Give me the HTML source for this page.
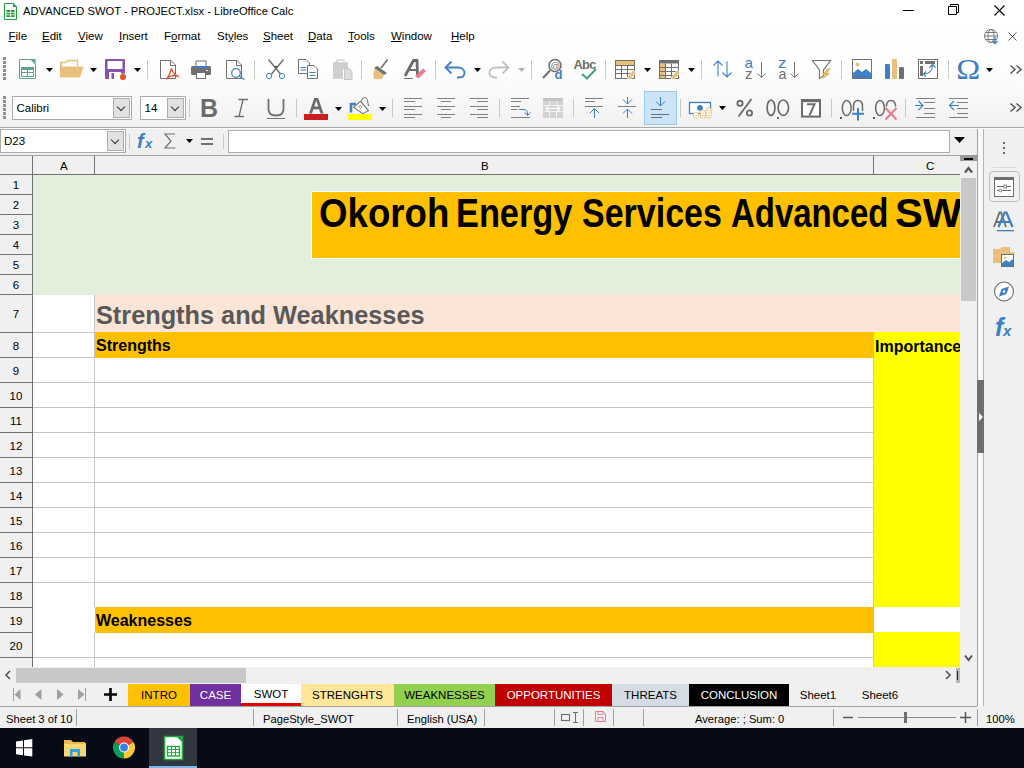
<!DOCTYPE html>
<html><head><meta charset="utf-8">
<style>
*{box-sizing:border-box;margin:0;padding:0}
html,body{width:1024px;height:768px;overflow:hidden;background:#f0f0f0;font-family:"Liberation Sans",sans-serif;font-size:11px;color:#000}
.a{position:absolute}
.t{position:absolute;white-space:nowrap;line-height:1}
#titlebar{left:0;top:0;width:1024px;height:24px;background:#fff}
#dock{left:0;top:24px;width:1024px;height:104px;background:linear-gradient(#fff 0%,#fefefe 45%,#f1f1f1 100%)}
#fbar{left:0;top:128px;width:1024px;height:27px;background:#f0f0f0}
#colhdr{left:0;top:155px;width:960px;height:20px;background:#f0f0f0}
#grid{left:0;top:0;width:960px;height:667px;overflow:hidden}
.gl{position:absolute;height:1px;background:#c6c6c6}
.glv{position:absolute;width:1px;background:#c6c6c6}
.rh{position:absolute;left:0;width:32px;text-align:center;font-size:11.5px;padding-top:1px}
.rhl{position:absolute;left:0;width:32px;height:1px;background:#727272}
#rowhdr{left:0;top:175px;width:33px;height:492px;background:#f0f0f0;border-right:1px solid #727272;overflow:hidden}
#sidebar{left:977px;top:155px;width:47px;height:551px;background:#f0f0f0}
#vscroll{left:960px;top:155px;width:17px;height:513px;background:#f0f0f0}
#hscroll{left:0;top:667px;width:960px;height:16px;background:#f0f0f0}
#tabs{left:0;top:683px;width:977px;height:23px;background:#f0f0f0}
#status{left:0;top:706px;width:1024px;height:22px;background:#f0f0f0}
#taskbar{left:0;top:728px;width:1024px;height:40px;background:#060b16}
.menu span{position:absolute;top:31px;font-size:11.5px;line-height:1;white-space:nowrap}
u{text-decoration:underline;text-underline-offset:1px}

.box{background:#fff;border:1px solid #acacac}
.btn{background:#e1e1e1;border:1px solid #adadad}
.btn::after{content:"";position:absolute;left:4px;top:5px;width:5px;height:5px;border-right:1.2px solid #333;border-bottom:1.2px solid #333;transform:rotate(45deg)}
.tab{position:absolute;top:684px;height:22px;line-height:23px;text-align:center;font-size:11.5px;white-space:nowrap}
.st{top:713.5px;font-size:11.2px}
.ssep{position:absolute;top:709px;width:1px;height:17px;background:#a0a0a0}
.ttl{top:193px;font-size:40px;font-weight:bold;transform-origin:0 0}
</style></head><body>

<div id="titlebar" class="a"></div>
<div id="dock" class="a"></div>
<!-- title bar -->
<svg class="a" style="left:4px;top:3px" width="13" height="17" viewBox="0 0 13 17">
<path d="M0.5 0.5H9L12.5 4V16.5H0.5Z" fill="#fff" stroke="#1e9e3a" stroke-width="1"/>
<path d="M9 0L13 4H9Z" fill="#1e9e3a"/>
<rect x="2.5" y="7" width="8" height="7" fill="#1e9e3a"/>
<path d="M2.5 9.5H10.5M2.5 11.8H10.5M6.5 7V14" stroke="#fff" stroke-width="0.8"/>
</svg>
<div class="t" style="left:23px;top:6px;font-size:11.2px;color:#000">ADVANCED SWOT - PROJECT.xlsx - LibreOffice Calc</div>
<div class="a" style="left:903px;top:10px;width:11px;height:1px;background:#000"></div>
<svg class="a" style="left:948px;top:4px" width="11" height="11" viewBox="0 0 11 11"><path d="M0.5 2.5H8.5V10.5H0.5Z M2.5 2.5V0.5H10.5V8.5H8.5" fill="none" stroke="#000" stroke-width="1"/></svg>
<svg class="a" style="left:994px;top:5px" width="11" height="11" viewBox="0 0 11 11"><path d="M0.5 0.5L10.5 10.5M10.5 0.5L0.5 10.5" stroke="#000" stroke-width="1.1"/></svg>
<!-- menu -->
<div class="menu">
<span style="left:8.5px"><u>F</u>ile</span>
<span style="left:42px"><u>E</u>dit</span>
<span style="left:78px"><u>V</u>iew</span>
<span style="left:119px"><u>I</u>nsert</span>
<span style="left:164px">F<u>o</u>rmat</span>
<span style="left:217px">St<u>y</u>les</span>
<span style="left:263px"><u>S</u>heet</span>
<span style="left:308px"><u>D</u>ata</span>
<span style="left:348px"><u>T</u>ools</span>
<span style="left:391px"><u>W</u>indow</span>
<span style="left:451px"><u>H</u>elp</span>
</div>
<svg class="a" style="left:983px;top:28px" width="18" height="17" viewBox="0 0 18 17">
<circle cx="8" cy="8" r="6.5" fill="none" stroke="#7a7a7a" stroke-width="1"/>
<ellipse cx="8" cy="8" rx="3" ry="6.5" fill="none" stroke="#7a7a7a" stroke-width="1"/>
<path d="M1.5 8H14.5M2.5 4.5H13.5M2.5 11.5H13.5" stroke="#7a7a7a" stroke-width="1"/>
<path d="M12 9V15.5M9.5 13L12 15.7L14.5 13" fill="none" stroke="#3d7fc4" stroke-width="1.2"/>
</svg>
<svg class="a" style="left:1008px;top:32px" width="9" height="9" viewBox="0 0 9 9"><path d="M0.5 0.5L8.5 8.5M8.5 0.5L0.5 8.5" stroke="#555" stroke-width="1"/></svg>

<div id="fbar" class="a"></div>
<div id="colhdr" class="a"></div>
<div id="rowhdr" class="a">
<div class="rh" style="top:0px;height:19px;line-height:19px">1</div>
<div class="rhl" style="top:19px"></div>
<div class="rh" style="top:20px;height:19px;line-height:19px">2</div>
<div class="rhl" style="top:39px"></div>
<div class="rh" style="top:40px;height:19px;line-height:19px">3</div>
<div class="rhl" style="top:59px"></div>
<div class="rh" style="top:60px;height:19px;line-height:19px">4</div>
<div class="rhl" style="top:79px"></div>
<div class="rh" style="top:80px;height:19px;line-height:19px">5</div>
<div class="rhl" style="top:99px"></div>
<div class="rh" style="top:100px;height:19px;line-height:19px">6</div>
<div class="rhl" style="top:119px"></div>
<div class="rh" style="top:120px;height:37px;line-height:37px">7</div>
<div class="rhl" style="top:157px"></div>
<div class="rh" style="top:158px;height:24px;line-height:24px">8</div>
<div class="rhl" style="top:182px"></div>
<div class="rh" style="top:183px;height:24px;line-height:24px">9</div>
<div class="rhl" style="top:207px"></div>
<div class="rh" style="top:208px;height:24px;line-height:24px">10</div>
<div class="rhl" style="top:232px"></div>
<div class="rh" style="top:233px;height:24px;line-height:24px">11</div>
<div class="rhl" style="top:257px"></div>
<div class="rh" style="top:258px;height:24px;line-height:24px">12</div>
<div class="rhl" style="top:282px"></div>
<div class="rh" style="top:283px;height:24px;line-height:24px">13</div>
<div class="rhl" style="top:307px"></div>
<div class="rh" style="top:308px;height:24px;line-height:24px">14</div>
<div class="rhl" style="top:332px"></div>
<div class="rh" style="top:333px;height:24px;line-height:24px">15</div>
<div class="rhl" style="top:357px"></div>
<div class="rh" style="top:358px;height:24px;line-height:24px">16</div>
<div class="rhl" style="top:382px"></div>
<div class="rh" style="top:383px;height:24px;line-height:24px">17</div>
<div class="rhl" style="top:407px"></div>
<div class="rh" style="top:408px;height:24px;line-height:24px">18</div>
<div class="rhl" style="top:432px"></div>
<div class="rh" style="top:433px;height:24px;line-height:24px">19</div>
<div class="rhl" style="top:457px"></div>
<div class="rh" style="top:458px;height:24px;line-height:24px">20</div>
<div class="rhl" style="top:482px"></div>
<div class="rh" style="top:483px;height:24px;line-height:24px">21</div>
<div class="rhl" style="top:507px"></div>
</div>
<div id="grid" class="a">
<div class="a" style="left:33px;top:175px;width:927px;height:492px;background:#fff"></div>
<div class="a" style="left:33px;top:175px;width:927px;height:120px;background:#e2efda"></div>
<div class="a" style="left:95px;top:294px;width:865px;height:38px;background:#fbe5d6"></div>
<div class="gl" style="left:33px;top:332px;width:62px"></div>
<div class="gl" style="left:33px;top:357px;width:62px"></div>
<div class="gl" style="left:33px;top:382px;width:62px"></div>
<div class="gl" style="left:33px;top:407px;width:62px"></div>
<div class="gl" style="left:33px;top:432px;width:62px"></div>
<div class="gl" style="left:33px;top:457px;width:62px"></div>
<div class="gl" style="left:33px;top:482px;width:62px"></div>
<div class="gl" style="left:33px;top:507px;width:62px"></div>
<div class="gl" style="left:33px;top:532px;width:62px"></div>
<div class="gl" style="left:33px;top:557px;width:62px"></div>
<div class="gl" style="left:33px;top:582px;width:62px"></div>
<div class="gl" style="left:33px;top:657px;width:62px"></div>
<div class="gl" style="left:33px;top:682px;width:62px"></div>
<div class="gl" style="left:95px;top:357px;width:779px"></div>
<div class="gl" style="left:95px;top:382px;width:779px"></div>
<div class="gl" style="left:95px;top:407px;width:779px"></div>
<div class="gl" style="left:95px;top:432px;width:779px"></div>
<div class="gl" style="left:95px;top:457px;width:779px"></div>
<div class="gl" style="left:95px;top:482px;width:779px"></div>
<div class="gl" style="left:95px;top:507px;width:779px"></div>
<div class="gl" style="left:95px;top:532px;width:779px"></div>
<div class="gl" style="left:95px;top:557px;width:779px"></div>
<div class="gl" style="left:95px;top:582px;width:779px"></div>
<div class="gl" style="left:95px;top:607px;width:779px"></div>
<div class="gl" style="left:95px;top:632px;width:779px"></div>
<div class="gl" style="left:95px;top:657px;width:779px"></div>
<div class="gl" style="left:95px;top:682px;width:779px"></div>
<div class="glv" style="left:94px;top:295px;height:400px"></div>
<div class="glv" style="left:873px;top:333px;height:400px"></div>
<div class="a" style="left:95px;top:332px;width:779px;height:26px;background:#ffc000"></div>
<div class="a" style="left:874px;top:332px;width:86px;height:275px;background:#ffff00"></div>
<div class="a" style="left:94px;top:607px;width:780px;height:26px;background:#ffc000"></div><div class="a" style="left:94px;top:607px;width:1px;height:26px;background:#fff"></div>
<div class="a" style="left:874px;top:632px;width:86px;height:40px;background:#ffff00"></div>
<div class="a" style="left:311px;top:191px;width:660px;height:68px;background:#ffc000;border:1px solid #fff"></div>
<div class="t ttl" style="left:319px;transform:scaleX(0.916)">Okoroh</div><div class="t ttl" style="left:456px;transform:scaleX(0.858)">Energy</div><div class="t ttl" style="left:582px;transform:scaleX(0.85)">Services</div><div class="t ttl" style="left:731px;transform:scaleX(0.823)">Advanced</div><div class="t ttl" style="left:895px;transform:scaleX(1.04)">SW</div>
<div class="t" style="left:96px;top:303px;font-size:25.3px;font-weight:bold;color:#595959">Strengths and Weaknesses</div>
<div class="t" style="left:96px;top:338px;font-size:16px;font-weight:bold">Strengths</div>
<div class="t" style="left:875px;top:339px;font-size:16px;font-weight:bold">Importance</div>
<div class="t" style="left:96px;top:613px;font-size:16px;font-weight:bold">Weaknesses</div>
</div>
<div id="vscroll" class="a"></div>
<div id="hscroll" class="a"></div>
<div id="sidebar" class="a"></div>
<div id="tabs" class="a"></div>
<div id="status" class="a"></div>
<div id="taskbar" class="a"></div>
<!--C2-->
<!-- dock separator line -->
<div class="a" style="left:0;top:127px;width:1024px;height:1px;background:#a9a9a9"></div>
<div class="a" style="left:0;top:128px;width:1024px;height:1px;background:#fcfcfc"></div>
<!-- font name box -->
<div class="a box" style="left:12px;top:96px;width:120px;height:24px"></div>
<div class="a btn" style="left:113px;top:98px;width:17px;height:20px"></div>
<div class="t" style="left:16.5px;top:103px;font-size:11.5px">Calibri</div>
<div class="a box" style="left:140px;top:96px;width:46px;height:24px"></div>
<div class="a btn" style="left:167px;top:98px;width:17px;height:20px"></div>
<div class="t" style="left:144.5px;top:103px;font-size:11.5px">14</div>
<!-- name box -->
<div class="a box" style="left:0;top:129px;width:126px;height:24px"></div>
<div class="a btn" style="left:107px;top:131px;width:17px;height:20px"></div>
<div class="t" style="left:4px;top:136px;font-size:11.5px">D23</div>
<!-- formula input -->
<div class="a box" style="left:228px;top:130px;width:722px;height:23px"></div>
<!-- column header -->
<div class="a" style="left:0;top:155px;width:960px;height:1px;background:#a0a0a0"></div>
<div class="a" style="left:0;top:174px;width:960px;height:1px;background:#727272"></div>
<div class="a" style="left:32px;top:156px;width:1px;height:19px;background:#727272"></div>
<div class="a" style="left:94px;top:156px;width:1px;height:19px;background:#727272"></div>
<div class="a" style="left:873px;top:156px;width:1px;height:19px;background:#727272"></div>
<div class="t" style="left:60px;top:161px;font-size:11.5px">A</div>
<div class="t" style="left:481px;top:161px;font-size:11.5px">B</div>
<div class="t" style="left:926px;top:161px;font-size:11.5px">C</div>
<!-- vertical scrollbar -->
<div class="a" style="left:960px;top:155px;width:17px;height:6px;background:#9a9a9a"></div>
<div class="a" style="left:964px;top:158px;width:9px;height:1.6px;background:#000"></div>
<svg class="a" style="left:960px;top:161px" width="17" height="17" viewBox="0 0 17 17"><path d="M5 11.5L8.5 7L12 11.5" fill="none" stroke="#555" stroke-width="2.2"/></svg>
<div class="a" style="left:961px;top:178px;width:15px;height:123px;background:#c8c8c8"></div>
<svg class="a" style="left:960px;top:650px" width="17" height="17" viewBox="0 0 17 17"><path d="M5 5.5L8.5 10L12 5.5" fill="none" stroke="#555" stroke-width="2"/></svg>
<!-- horizontal scrollbar -->
<svg class="a" style="left:0;top:667px" width="16" height="16" viewBox="0 0 16 16"><path d="M10 4L6 8L10 12" fill="none" stroke="#555" stroke-width="1.6"/></svg>
<div class="a" style="left:16px;top:668px;width:230px;height:15px;background:#c8c8c8"></div>
<svg class="a" style="left:940px;top:667px" width="16" height="16" viewBox="0 0 16 16"><path d="M6 4L10 8L6 12" fill="none" stroke="#555" stroke-width="1.6"/></svg>
<div class="a" style="left:956px;top:668px;width:4px;height:15px;background:#b8b8b8"></div>
<div class="a" style="left:957px;top:671px;width:1px;height:9px;background:#222"></div>
<!-- sidebar borders -->
<div class="a" style="left:977px;top:129px;width:1px;height:577px;background:#a0a0a0"></div>
<div class="a" style="left:983px;top:129px;width:1px;height:577px;background:#b4b4b4"></div>
<div class="a" style="left:978px;top:129px;width:5px;height:577px;background:#f8f8f8"></div>
<div class="a" style="left:977px;top:380px;width:7px;height:73px;background:#6e6e6e"></div>
<svg class="a" style="left:977px;top:410px" width="7" height="14" viewBox="0 0 7 14"><path d="M2 3L6 7L2 11Z" fill="#fff"/></svg>
<div class="a" style="left:984px;top:130px;width:40px;height:576px;background:#f0f0f0"></div>
<!--I1-->
<svg class="a" style="left:0;top:0" width="1024" height="160" viewBox="0 0 1024 160">
<defs>
<path id="dd" d="M0 0H7L3.5 4Z"/>
</defs>
<!-- grips -->
<g fill="#8f8f8f">
<rect x="3" y="57" width="3" height="3"/><rect x="3" y="61" width="3" height="3"/><rect x="3" y="65" width="3" height="3"/><rect x="3" y="69" width="3" height="3"/><rect x="3" y="73" width="3" height="3"/><rect x="3" y="77" width="3" height="3"/>
<rect x="3" y="96" width="3" height="3"/><rect x="3" y="100" width="3" height="3"/><rect x="3" y="104" width="3" height="3"/><rect x="3" y="108" width="3" height="3"/><rect x="3" y="112" width="3" height="3"/><rect x="3" y="116" width="3" height="3"/>
</g>
<!-- separators tb1 -->
<g fill="#c8c8c8">
<rect x="147" y="60" width="1" height="19"/><rect x="254" y="60" width="1" height="19"/><rect x="361" y="60" width="1" height="19"/><rect x="435" y="60" width="1" height="19"/><rect x="531" y="60" width="1" height="19"/><rect x="605" y="60" width="1" height="19"/><rect x="701" y="60" width="1" height="19"/><rect x="841" y="60" width="1" height="19"/><rect x="948" y="60" width="1" height="19"/>
<rect x="189" y="99" width="1" height="18"/><rect x="296" y="99" width="1" height="18"/><rect x="392" y="99" width="1" height="18"/><rect x="499" y="99" width="1" height="18"/><rect x="573" y="99" width="1" height="18"/><rect x="680" y="99" width="1" height="18"/><rect x="831" y="99" width="1" height="18"/><rect x="905" y="99" width="1" height="18"/>
<rect x="129" y="134" width="1" height="15"/><rect x="223" y="134" width="1" height="15"/>
</g>
<!-- dropdown arrows -->
<g fill="#000">
<use href="#dd" x="46" y="68"/><use href="#dd" x="90" y="68"/><use href="#dd" x="134" y="68"/>
<use href="#dd" x="474" y="68" transform="translate(0,0)"/>
<use href="#dd" x="644" y="68"/><use href="#dd" x="688" y="68"/><use href="#dd" x="986" y="68"/>
<use href="#dd" x="335" y="107"/><use href="#dd" x="379" y="107"/><use href="#dd" x="719" y="106"/>
<use href="#dd" x="186" y="139"/>
</g>
<use href="#dd" x="518" y="68" fill="#b4b4b4"/>
<!-- new spreadsheet -->
<g>
<path d="M19.5 59.5H31L35.5 64V78.5H19.5Z" fill="#fff" stroke="#5fa487"/>
<path d="M30 59H35.5V64.5Z" fill="#5fa487"/>
<rect x="21.5" y="67.5" width="12" height="9" fill="#fff" stroke="#5fa487"/>
<rect x="21" y="67" width="13" height="3" fill="#5fa487"/>
<path d="M21.5 72.5H33.5M27.5 70V76.5" stroke="#5fa487" stroke-width="1"/>
</g>
<!-- open folder -->
<g>
<path d="M60.5 62.5H66L68 60.5H77.5V66" fill="none" stroke="#e8c07c" stroke-width="1.3"/>
<path d="M60 66.5H83.5L80 77.5H60Z" fill="#e8c07c"/>
<path d="M60 62H62V77H60Z" fill="#e8c07c"/>
</g>
<!-- save -->
<g>
<rect x="105" y="59" width="20" height="20" rx="1" fill="#8952ad"/>
<rect x="107.5" y="61" width="15" height="8" fill="#fff"/>
<rect x="109" y="72" width="12" height="7" fill="#fff"/>
<rect x="111.5" y="73" width="2.5" height="6" fill="#8952ad"/>
<circle cx="123" cy="77" r="3.6" fill="#fff"/>
<circle cx="123" cy="77" r="3" fill="#e0532b"/>
</g>
<!-- pdf -->
<g>
<path d="M160.5 60.5H171L175.5 65V78.5H160.5Z" fill="#fff" stroke="#707070"/>
<path d="M170.5 60.5V65.5H175.5" fill="none" stroke="#707070"/>
<path d="M171.5 68.5C170.5 72 169 75.5 166.5 79.5M171.5 68.5C172.5 72 175 75 179 77M167 78C170 75.5 174 75 178.5 76" fill="none" stroke="#e0532b" stroke-width="1.3"/>
</g>
<!-- print -->
<g>
<rect x="196" y="61" width="10" height="6" fill="#fff" stroke="#707070"/>
<rect x="191" y="66" width="20" height="9" rx="1.5" fill="#707070"/>
<rect x="195" y="66" width="12" height="2" fill="#3f7fc4"/>
<rect x="196.5" y="72.5" width="9" height="6" fill="#fff" stroke="#707070"/>
<rect x="206" y="70" width="2" height="1" fill="#fff"/>
</g>
<!-- print preview -->
<g>
<path d="M226.5 60.5H237L241.5 65V78.5H226.5Z" fill="#fff" stroke="#707070"/>
<path d="M236.5 60.5V65.5H241.5" fill="none" stroke="#707070"/>
<circle cx="236" cy="73" r="4.3" fill="#fff" stroke="#3f7fc4" stroke-width="1.3"/>
<path d="M239 76L244.5 79.5" stroke="#3f7fc4" stroke-width="1.3"/>
</g>
<!-- cut -->
<g>
<path d="M268.5 59.5L280.5 74M283.5 59.5L271.5 74" stroke="#707070" stroke-width="1.5"/><circle cx="276" cy="67" r="1.2" fill="#505050"/>
<circle cx="269" cy="76" r="2.6" fill="#fff" stroke="#3f7fc4" stroke-width="1"/>
<circle cx="282" cy="76" r="2.6" fill="#fff" stroke="#3f7fc4" stroke-width="1"/>
</g>
<!-- copy -->
<g>
<path d="M298.5 59.5H306L309.5 63V73.5H298.5Z" fill="#fff" stroke="#707070"/>
<path d="M300.5 67.5H306M300.5 70H306" stroke="#3f7fc4"/>
<path d="M307.5 65.5H314L317.5 69V78.5H307.5Z" fill="#fff" stroke="#707070"/>
<path d="M309.5 72.5H315.5M309.5 75.5H315.5" stroke="#3f7fc4"/>
</g>
<!-- paste disabled -->
<g>
<path d="M333 62H337V60.5H344V62H348V69H343V79H333Z" fill="#cfcfcf"/>
<path d="M344.5 68.5H349L352 71.5V79.5H344.5Z" fill="#dcdcdc" stroke="#c4c4c4"/>
<rect x="337" y="60" width="7" height="3" fill="#fff" stroke="#c4c4c4"/>
</g>
<!-- clone brush -->
<g>
<path d="M387.5 59.5L381 68" stroke="#707070" stroke-width="1.6"/>
<path d="M377 66L387 73L384 75L374 68Z" fill="#707070"/>
<path d="M375 68.5L384 75C383 77 382 79 381 79H374C373 77 373 73 375 68.5Z" fill="#e8c07c"/>
</g>
<!-- clear formatting -->
<g>
<path d="M405 76L413.5 60.5H417L417.5 76" fill="none" stroke="#6b6b6b" stroke-width="2.8"/>
<path d="M409 70H417" stroke="#707070" stroke-width="2"/>
<path d="M404 78.5H413" stroke="#707070" stroke-width="1"/>
<path d="M415 76L423 68.5L426 71L418.5 78.5Z" fill="#e47d8e"/>
</g>
<!-- undo -->
<g fill="none" stroke="#3f7fc4" stroke-width="1.8">
<path d="M446 67.5H458C462 67.5 464.5 70 464.5 73C464.5 76 462 77.5 459 77.5H457"/>
<path d="M451.5 61.5L445.5 67.5L451.5 73.5"/>
</g>
<!-- redo -->
<g fill="none" stroke="#c0c0c0" stroke-width="1.8">
<path d="M508 67.5H496C492 67.5 489.5 70 489.5 73C489.5 76 492 77.5 495 77.5H497"/>
<path d="M502.5 61.5L508.5 67.5L502.5 73.5"/>
</g>
<!-- find & replace -->
<g>
<circle cx="555" cy="65.5" r="6" fill="#fff" stroke="#707070" stroke-width="1.6"/>
<path d="M550 70.5L543 78" stroke="#707070" stroke-width="2"/>
<text x="550.5" y="69" font-family="Liberation Sans" font-size="9.5" fill="#707070">@</text>
<text x="554.5" y="79" font-family="Liberation Sans" font-weight="bold" font-size="13" fill="#3f7fc4">d</text>
</g>
<!-- spelling -->
<g>
<text x="573.5" y="69" font-family="Liberation Sans" font-weight="bold" font-size="13" fill="#707070" textLength="23">Abc</text>
<path d="M582 74L587 78.5L596 69" fill="none" stroke="#4fa084" stroke-width="2.2"/>
</g>
<!-- row table -->
<g>
<rect x="615.5" y="60.5" width="19" height="18" fill="#fff" stroke="#707070"/>
<rect x="616" y="61" width="18" height="4" fill="#e8c07c"/>
<path d="M615.5 65.5H634.5M615.5 69.5H634.5M615.5 73.5H634.5M621.5 65.5V78.5M627.5 65.5V78.5" stroke="#707070"/>
<path d="M627 78L633 70L636 72.5L630 80Z" fill="#e8c07c" stroke="#fff" stroke-width="0.6"/>
</g>
<!-- column table -->
<g>
<rect x="659.5" y="60.5" width="19" height="18" fill="#fff" stroke="#707070"/>
<rect x="659" y="60" width="20" height="3.5" fill="#707070"/>
<rect x="660" y="64" width="5" height="14" fill="#e8c07c"/>
<path d="M665.5 63.5V78.5M671.5 63.5V78.5M659.5 67.5H678.5M659.5 71.5H678.5M659.5 75.5H678.5" stroke="#707070"/>
<path d="M671 78L677 70L680 72.5L674 80Z" fill="#e8c07c" stroke="#fff" stroke-width="0.6"/>
</g>
<!-- sort -->
<g fill="none" stroke="#3f7fc4" stroke-width="1.1">
<path d="M718 61V76.5M713.5 65.5L718 61L722.5 65.5"/>
<path d="M727 61.5V77M722.5 72.5L727 77L731.5 72.5"/>
</g>
<!-- sort ascending -->
<g>
<text x="744.5" y="68" font-family="Liberation Sans" font-size="15" fill="#3f7fc4" textLength="8.5" lengthAdjust="spacingAndGlyphs">a</text>
<text x="745" y="79" font-family="Liberation Sans" font-size="14" fill="#707070" textLength="7.5" lengthAdjust="spacingAndGlyphs">z</text>
<path d="M761.5 62V77.5M757.5 73.5L761.5 77.5L765.5 73.5" fill="none" stroke="#707070" stroke-width="1"/>
</g>
<!-- sort descending -->
<g>
<text x="778" y="68" font-family="Liberation Sans" font-size="15" fill="#3f7fc4" textLength="8.5" lengthAdjust="spacingAndGlyphs">z</text>
<text x="778.5" y="79" font-family="Liberation Sans" font-size="14" fill="#707070" textLength="8" lengthAdjust="spacingAndGlyphs">a</text>
<path d="M794.5 62V77.5M790.5 73.5L794.5 77.5L798.5 73.5" fill="none" stroke="#707070" stroke-width="1"/>
</g>
<!-- autofilter -->
<g>
<path d="M812.5 60.5H830.5L823.5 70V76L819.5 78.5V70Z" fill="#fff" stroke="#707070" stroke-width="1.1"/>
<path d="M828 68.5L821.5 75.5H825L821 80.5L830.5 73H827L831 68.5Z" fill="#e8b45a"/>
</g>
<!-- image -->
<g>
<rect x="852.5" y="59.5" width="19" height="19" fill="#fff" stroke="#707070"/>
<circle cx="857.5" cy="64.5" r="2" fill="#e8c07c"/>
<path d="M853 78V73L858 69L862 72L866 69L871 73V78Z" fill="#3f7fc4"/>
</g>
<!-- chart -->
<g>
<rect x="885" y="64" width="5" height="15" rx="1" fill="#3f7fc4"/>
<rect x="892" y="59" width="5" height="20" rx="1" fill="#e8c07c"/>
<rect x="899" y="67" width="5" height="12" rx="1" fill="#707070"/>
</g>
<!-- pivot -->
<g>
<rect x="918.5" y="59.5" width="19" height="19" fill="#fff" stroke="#707070"/>
<rect x="920" y="61" width="3" height="3" fill="#707070"/>
<rect x="920" y="66" width="3" height="10" fill="#707070"/>
<rect x="925" y="61" width="10" height="3" fill="#707070"/>
<path d="M923.5 74C929 74 932.5 70.5 932.5 65M929.5 67.5L932.5 64.5L935.5 67.5M926 71.5L923.5 74L926 76.5" fill="none" stroke="#3f7fc4" stroke-width="1.1"/>
</g>
<!-- omega -->
<text x="956.3" y="78.8" font-family="Liberation Serif" font-size="30" fill="#3f7fc4" textLength="24" lengthAdjust="spacingAndGlyphs">Ω</text>
<!-- chevrons -->
<path d="M1010.5 65.5L1015 69.5L1010.5 73.5M1016.5 65.5L1021 69.5L1016.5 73.5" fill="none" stroke="#555" stroke-width="1.5"/>
<path d="M1010.5 103.5L1015 107.5L1010.5 111.5M1016.5 103.5L1021 107.5L1016.5 111.5" fill="none" stroke="#555" stroke-width="1.5"/>
</svg>
<!--I2-->
<svg class="a" style="left:0;top:0" width="1024" height="160" viewBox="0 0 1024 160">
<!-- bold -->
<text x="200" y="117" font-family="Liberation Sans" font-weight="bold" font-size="25" fill="#6b6b6b">B</text>
<!-- italic -->
<path d="M243 99.5L239 116.5M238.5 99.5H248M234.5 116.5H244" stroke="#707070" stroke-width="1.3" fill="none"/>
<!-- underline -->
<path d="M268.5 99V109C268.5 113.5 271.5 115.5 276 115.5C280.5 115.5 283.5 113.5 283.5 109V99" fill="none" stroke="#707070" stroke-width="1.8"/>
<rect x="267" y="118" width="18" height="1" fill="#707070"/>
<!-- font color -->
<path d="M309 113.5L314.3 98H318.2L323.5 113.5H320.5L319.1 109.3H313.4L312 113.5Z M314.3 106.6H318.2L316.25 100.6Z" fill="#6b6b6b" fill-rule="evenodd"/>
<rect x="304" y="114" width="24" height="6" fill="#cc1f1f"/>
<!-- highlight -->
<path d="M351 112.5V104H356" fill="none" stroke="#3f7fc4" stroke-width="2.6"/>
<path d="M361.5 101C361.5 96.5 367.5 96.5 367.5 100.5L368.5 106" fill="none" stroke="#707070" stroke-width="1"/>
<path d="M353.6 107.2L360.6 101.3L368.5 110.7L362.8 113.7Z" fill="#fff" stroke="#707070" stroke-width="1.1"/>
<path d="M360.3 105.3L362 107L360.3 108.7L358.6 107Z" fill="#fff" stroke="#707070" stroke-width="0.8"/>
<rect x="348" y="114" width="24" height="6" fill="#ffff00"/>
<!-- align left/center/right -->
<g fill="#808080">
<rect x="404" y="98" width="18" height="1"/><rect x="404" y="101" width="11" height="1"/><rect x="404" y="106" width="18" height="1"/><rect x="404" y="109" width="11" height="1"/><rect x="404" y="114" width="18" height="1"/><rect x="404" y="117" width="11" height="1"/>
<rect x="437" y="98" width="18" height="1"/><rect x="441" y="101" width="10" height="1"/><rect x="437" y="106" width="18" height="1"/><rect x="441" y="109" width="10" height="1"/><rect x="437" y="114" width="18" height="1"/><rect x="441" y="117" width="10" height="1"/>
<rect x="470" y="98" width="18" height="1"/><rect x="477" y="101" width="11" height="1"/><rect x="470" y="106" width="18" height="1"/><rect x="477" y="109" width="11" height="1"/><rect x="470" y="114" width="18" height="1"/><rect x="477" y="117" width="11" height="1"/>
</g>
<!-- wrap -->
<g>
<rect x="511" y="98" width="18" height="1" fill="#808080"/><rect x="511" y="101" width="10" height="1" fill="#808080"/><rect x="511" y="106" width="9" height="1" fill="#808080"/><rect x="511" y="109" width="6" height="1" fill="#808080"/><rect x="511" y="117" width="19" height="1" fill="#808080"/>
<path d="M519 109.5H524C526 109.5 527.5 111 527.5 113V115M524.5 112.5L527.5 115.5L530.5 112.5" fill="none" stroke="#3f7fc4" stroke-width="1"/>
</g>
<!-- merge disabled -->
<g>
<rect x="543" y="98" width="20" height="20" fill="#d4d4d4"/>
<rect x="543" y="98" width="20" height="3" fill="#c4c4c4"/>
<path d="M543.5 105.5H562.5M543.5 111.5H562.5M549.5 101V105.5M556.5 101V105.5M549.5 111.5V118M556.5 111.5V118" stroke="#f2f2f2" stroke-width="1"/>
<path d="M546 108.5H560M548.5 106L546 108.5L548.5 111M557.5 106L560 108.5L557.5 111" fill="none" stroke="#fff" stroke-width="1.1"/>
</g>
<!-- align top -->
<g>
<rect x="585" y="98" width="18" height="1" fill="#808080"/><rect x="585" y="101" width="10" height="1" fill="#808080"/><rect x="585" y="106" width="18" height="1" fill="#808080"/>
<path d="M594.5 118V108.5M590 113L594.5 108.5L599 113" fill="none" stroke="#3f7fc4" stroke-width="1"/>
</g>
<!-- center vertical -->
<g>
<rect x="618" y="106" width="18" height="1" fill="#808080"/>
<path d="M627.5 97V104M623 99.5L627.5 104L632 99.5M627.5 118V109M623 113.5L627.5 109L632 113.5" fill="none" stroke="#3f7fc4" stroke-width="1"/>
</g>
<!-- align bottom selected -->
<rect x="644.5" y="91.5" width="32" height="33" fill="#cce4f7" stroke="#99c9ef"/>
<g>
<rect x="651" y="114" width="18" height="1" fill="#707070"/><rect x="651" y="117" width="11" height="1" fill="#707070"/><rect x="651" y="109" width="11" height="1" fill="#707070"/>
<path d="M660.5 97V106M656 101.5L660.5 106L665 101.5" fill="none" stroke="#3f7fc4" stroke-width="1"/>
</g>
<!-- currency -->
<g>
<rect x="689.5" y="102.5" width="21" height="11" fill="#fff" stroke="#3f7fc4" stroke-width="1.3"/>
<circle cx="700" cy="107.8" r="2.9" fill="#3f7fc4"/>
<rect x="693.5" y="112.5" width="5" height="5.5" rx="2" fill="#fff" stroke="#e8c07c" stroke-width="0.9"/>
<rect x="700.5" y="110.5" width="5" height="7.5" rx="2" fill="#fff" stroke="#e8c07c" stroke-width="0.9"/>
<rect x="706" y="108" width="5" height="10" rx="2" fill="#fff" stroke="#e8c07c" stroke-width="0.9"/>
<path d="M694.5 115.2H697.5M701.5 113H704.5M701.5 115.5H704.5M707 110.7H710M707 113H710M707 115.5H710" stroke="#e8c07c" stroke-width="0.8"/>
</g>
<!-- percent -->
<g fill="none" stroke="#6b6b6b" stroke-width="1.9"><circle cx="740" cy="103.3" r="2.6"/><circle cx="749.5" cy="113" r="2.6"/><path d="M751.5 99L738.5 116.5"/></g>
<!-- 0.0 -->
<g fill="none" stroke="#6b6b6b" stroke-width="1.7"><ellipse cx="771" cy="107.7" rx="3.9" ry="7.7"/><ellipse cx="783.3" cy="107.7" rx="5.2" ry="7.7"/></g><rect x="777" y="117" width="2" height="2" fill="#6b6b6b"/>
<!-- 7 in box -->
<rect x="802" y="100" width="18" height="16.6" fill="#fff" stroke="#6b6b6b" stroke-width="2"/><rect x="801" y="99" width="20" height="3.2" fill="#6b6b6b"/><path d="M807 104.3H814.5L809.5 115.5" fill="none" stroke="#6b6b6b" stroke-width="2"/>
<!-- add decimal -->
<rect x="840" y="117" width="2" height="2" fill="#555"/><g fill="none" stroke="#6b6b6b" stroke-width="1.5"><ellipse cx="846.7" cy="108" rx="4.4" ry="7.6"/><path d="M853.5 111V106.5C853.5 102.5 855.5 100.4 858 100.4C860.5 100.4 862.5 102.5 862.5 106.5V111"/></g><path d="M852 113.8H864M858 108V120.5" stroke="#3f7fc4" stroke-width="2"/>
<!-- delete decimal -->
<rect x="873" y="117" width="2" height="2" fill="#555"/><g fill="none" stroke="#6b6b6b" stroke-width="1.5"><ellipse cx="880" cy="108" rx="4.4" ry="7.6"/><path d="M886.5 106.5C886.5 102.5 888.5 100.4 891 100.4C893.5 100.4 895.5 102.5 895.5 106.5"/></g><path d="M885.5 108L896.5 119.5M896.5 108L885.5 119.5" stroke="#e47d8e" stroke-width="2.2"/>
<!-- increase indent -->
<g fill="#808080">
<rect x="916" y="98" width="19" height="1"/><rect x="924" y="102" width="11" height="1"/><rect x="924" y="108" width="11" height="1"/><rect x="924" y="113" width="11" height="1"/><rect x="916" y="117" width="19" height="1"/>
</g>
<path d="M915 105.5H923M918.5 101L923 105.5L918.5 110" fill="none" stroke="#3f7fc4" stroke-width="1.1"/>
<g fill="#808080">
<rect x="949" y="98" width="19" height="1"/><rect x="957" y="102" width="11" height="1"/><rect x="957" y="108" width="11" height="1"/><rect x="957" y="113" width="11" height="1"/><rect x="949" y="117" width="19" height="1"/>
</g>
<path d="M959 105.5H949.5M954 101L949.5 105.5L954 110" fill="none" stroke="#3f7fc4" stroke-width="1.1"/>
<!-- formula bar icons -->
<text x="137" y="148" font-family="Liberation Sans" font-style="italic" font-weight="bold" font-size="20" fill="#3f7fc4">f</text>
<text x="145" y="148" font-family="Liberation Sans" font-style="italic" font-weight="bold" font-size="13" fill="#3f7fc4">x</text>
<path d="M175 134H165L171 141L165 148H175.5" fill="none" stroke="#707070" stroke-width="1.2"/>
<rect x="201" y="138" width="12" height="2" fill="#707070"/><rect x="201" y="143" width="12" height="2" fill="#707070"/>
<path d="M954 137H965L959.5 143Z" fill="#000"/>
</svg>
<!--C3-->
<!-- sidebar content -->
<div class="a" style="left:1003px;top:142px;width:2px;height:2px;background:#6a6a6a"></div>
<div class="a" style="left:1003px;top:147px;width:2px;height:2px;background:#6a6a6a"></div>
<div class="a" style="left:1003px;top:152px;width:2px;height:2px;background:#6a6a6a"></div>
<div class="a" style="left:993px;top:167px;width:23px;height:1px;background:#d8d8d8"></div>
<div class="a" style="left:988.5px;top:171px;width:31px;height:31px;border:1px solid #bdbdbd;border-radius:4px;background:#f0f0f0"></div>
<svg class="a" style="left:984px;top:170px" width="40" height="170" viewBox="984 170 40 170">
<rect x="994.5" y="177.5" width="19" height="19" fill="#fff" stroke="#6e6e6e"/>
<rect x="994" y="177" width="20" height="3" fill="#6e6e6e"/>
<path d="M997 186.5H1011M997 190.5H1011" stroke="#6e6e6e" stroke-width="1"/>
<rect x="1004" y="185" width="2.5" height="3" fill="#fff" stroke="#6e6e6e" stroke-width="0.8"/>
<circle cx="1000.5" cy="190.5" r="1.4" fill="#fff" stroke="#6e6e6e" stroke-width="0.8"/>
<path d="M994 227L999.5 212.5H1001L1006 227M996 222H1004" fill="none" stroke="#6e6e6e" stroke-width="1.8"/>
<path d="M998.5 227L1004.5 212.5H1006.5L1012.5 227M1001 222H1010" fill="none" stroke="#3f7fc4" stroke-width="2.2"/>
<rect x="997" y="230" width="17" height="1.3" fill="#3f7fc4"/>
<path d="M993 249H1000L1002 247H1010V252H1015L1012 263H993Z" fill="#e8c07c"/>
<rect x="1001.5" y="254.5" width="12" height="12" fill="#fff" stroke="#6e6e6e"/>
<circle cx="1005" cy="258" r="1.3" fill="#e8c07c"/>
<path d="M1002 266V263L1006 260L1009 262L1013 259V266Z" fill="#3f7fc4"/>
<circle cx="1004" cy="291.5" r="9.5" fill="#fff" stroke="#6e6e6e" stroke-width="1.1"/>
<path d="M1009 286.5L1006.5 294L999 296.5L1001.5 289Z" fill="#3f7fc4"/>
<circle cx="1004" cy="291.5" r="1.3" fill="#fff"/>
<text x="995" y="336" font-family="Liberation Sans" font-style="italic" font-weight="bold" font-size="25" fill="#3f7fc4">f</text>
<text x="1003" y="336" font-family="Liberation Sans" font-style="italic" font-weight="bold" font-size="15" fill="#3f7fc4">x</text>
</svg>
<!-- sheet tabs -->
<svg class="a" style="left:0;top:683px" width="128" height="23" viewBox="0 683 128 23">
<rect x="13" y="688" width="1" height="13" fill="#a0a0a0"/>
<path d="M14.5 694.5L20.5 689V700Z" fill="#a0a0a0"/>
<path d="M35 694.5L41.5 689V700Z" fill="#a0a0a0"/>
<path d="M63.5 694.5L57 689V700Z" fill="#a0a0a0"/>
<path d="M84.5 694.5L78 689V700Z" fill="#a0a0a0"/>
<rect x="85" y="688" width="1" height="13" fill="#a0a0a0"/>
<path d="M110.5 688V701M104 694.5H117" stroke="#000" stroke-width="2.6"/>
</svg>
<div class="tab" style="left:128px;width:62px;background:#ffc000">INTRO</div>
<div class="tab" style="left:190px;width:51px;background:#7030a0;color:#fff">CASE</div>
<div class="tab" style="left:241px;width:60px;background:#fff;border-bottom:3px solid #e00000;line-height:20px">SWOT</div>
<div class="tab" style="left:301px;width:93px;background:#ffe699">STRENGHTS</div>
<div class="tab" style="left:394px;width:101px;background:#92d050">WEAKNESSES</div>
<div class="tab" style="left:495px;width:117px;background:#c00000;color:#fff">OPPORTUNITIES</div>
<div class="tab" style="left:612px;width:77px;background:#d6dce4">THREATS</div>
<div class="tab" style="left:689px;width:100px;background:#000;color:#fff">CONCLUSION</div>
<div class="tab" style="left:789px;width:58px">Sheet1</div>
<div class="tab" style="left:847px;width:66px">Sheet6</div>
<div class="a" style="left:0;top:706px;width:977px;height:1px;background:#a0a0a0"></div>
<!-- status bar -->
<div class="t st" style="left:6px">Sheet 3 of 10</div>
<div class="t st" style="left:263px">PageStyle_SWOT</div>
<div class="t st" style="left:407px">English (USA)</div>
<div class="t st" style="left:695px">Average: ; Sum: 0</div>
<div class="t st" style="left:986px">100%</div>
<div class="ssep" style="left:76px"></div><div class="ssep" style="left:253px"></div><div class="ssep" style="left:397px"></div><div class="ssep" style="left:484px"></div><div class="ssep" style="left:554px"></div><div class="ssep" style="left:583px"></div><div class="ssep" style="left:613px"></div><div class="ssep" style="left:643px"></div><div class="ssep" style="left:833px"></div><div class="ssep" style="left:977px"></div>
<svg class="a" style="left:540px;top:706px" width="440" height="22" viewBox="540 706 440 22">
<rect x="561.5" y="714.5" width="8" height="6" fill="none" stroke="#6e6e6e" stroke-width="1.1"/>
<path d="M573 712.5H578M575.5 712.5V722.5M573 722.5H578" stroke="#6e6e6e" stroke-width="1.1"/>
<path d="M595.5 711.5H603L605.5 714V721.5H595.5Z" fill="none" stroke="#e47d8e" stroke-width="1"/>
<rect x="598" y="711.5" width="5" height="3" fill="none" stroke="#e47d8e" stroke-width="0.9"/>
<rect x="598" y="717.5" width="5" height="4" fill="none" stroke="#e47d8e" stroke-width="0.9"/>
<path d="M843 717.5H853" stroke="#555" stroke-width="1.5"/>
<path d="M858 717.5H956" stroke="#8a8a8a" stroke-width="1.2"/>
<rect x="904" y="712" width="3" height="11" fill="#6e6e6e"/>
<path d="M960 717.5H971M965.5 712V723" stroke="#555" stroke-width="1.5"/>
</svg>
<!-- taskbar icons -->
<svg class="a" style="left:0;top:728px" width="210" height="40" viewBox="0 728 210 40">
<path d="M16 741.5L23 740.5V747.3H16Z M24 740.3L32.3 739V747.3H24Z M16 748.3H23V755.3L16 754.3Z M24 748.3H32.3V756.6L24 755.5Z" fill="#fff"/>
<path d="M64 741.5H71L73 743H86V756.5H64Z" fill="#f7d674"/>
<path d="M64 740H71L73 742H85V744H64Z" fill="#e9b94a"/>
<path d="M70 749H80V757H77.5V752H72.5V757H70Z" fill="#2d9fe3"/>
<path d="M124 747.5L114.47 742A11 11 0 0 1 133.53 742Z" fill="#db4437"/>
<path d="M124 747.5L133.53 742A11 11 0 0 1 124 758.5Z" fill="#fcc934"/>
<path d="M124 747.5L124 758.5A11 11 0 0 1 114.47 742Z" fill="#0f9d58"/>
<circle cx="124" cy="747.5" r="5" fill="#fff"/>
<circle cx="124" cy="747.5" r="3.9" fill="#3c7fe6"/>
<rect x="149" y="728" width="48" height="40" fill="#32363e"/>
<rect x="149" y="766" width="48" height="2" fill="#76b9ed"/>
<path d="M164.5 736.5H177.5L182.5 741.5V759.5H164.5Z" fill="#fff" stroke="#22a53f" stroke-width="1.6"/>
<path d="M177 735.7H183.3V742Z" fill="#22a53f"/>
<rect x="167.5" y="746.5" width="12" height="9.5" fill="none" stroke="#22a53f" stroke-width="1.4"/>
<path d="M167.5 749.5H179.5M167.5 752.7H179.5M171.5 746.5V756M175.5 746.5V756" stroke="#22a53f" stroke-width="1"/>
</svg>


</body></html>
